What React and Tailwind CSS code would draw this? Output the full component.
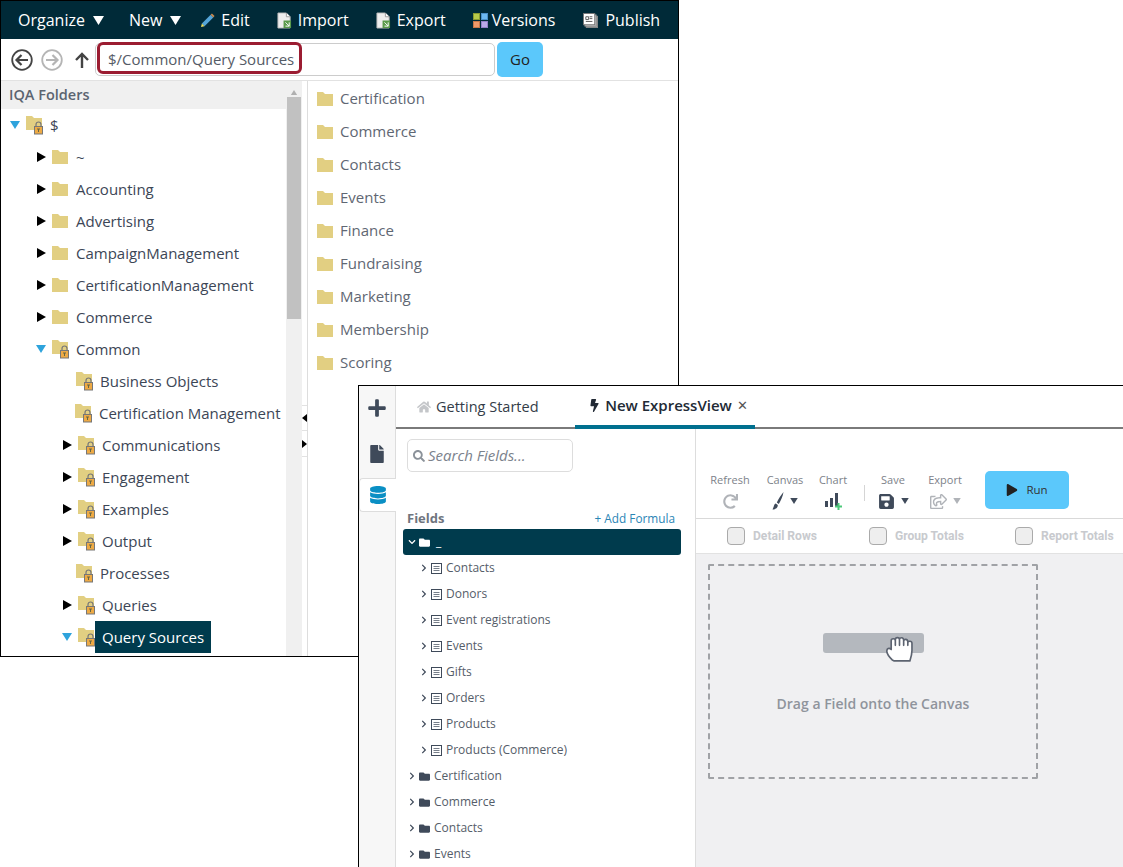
import React from 'react';
import {
  FaPlus, FaFile, FaDatabase, FaBolt, FaHome, FaSearch, FaRedo, FaSave,
  FaRegShareSquare, FaPlay, FaFolder, FaChevronRight, FaChevronDown,
} from 'react-icons/fa';

function Caret({ className }) {
  return (
    <svg viewBox="0 0 10 8" className={className}>
      <path d="M0 0h10L5 8z" fill="currentColor" />
    </svg>
  );
}

function RightTri() {
  return (
    <svg viewBox="0 0 9 10" className="w-[9px] h-[10px] text-black">
      <path d="M0 0l9 5-9 5z" fill="currentColor" />
    </svg>
  );
}

function Folder({ size = 'w-[16px] h-[14px]' }) {
  return (
    <svg viewBox="0 0 16 14" className={size}>
      <path d="M0 0h6l2 2h8v12H0z" fill="#e2cf82" />
    </svg>
  );
}

function LockFolder() {
  return (
    <svg viewBox="0 0 20 20" className="w-[20px] h-[20px] shrink-0">
      <path d="M0 1h6l2 2h8v12H0z" fill="#e2cf82" />
      <path d="M10 12V9.500a2.500 2.500 0 0 1 5 0V12" fill="none" stroke="#777" strokeWidth="1.200" />
      <rect x="8.500" y="11.500" width="8" height="7.500" fill="#eeaa44" stroke="#777" />
      <path d="M11 14h3M12.500 14v3" stroke="#664" strokeWidth="1" />
    </svg>
  );
}

function FileIcon({ color }) {
  return (
    <svg viewBox="0 0 16 18" className="w-[15px] h-[17px]">
      <path d="M1 1h9l4 4v12H1z" fill="#eee" stroke="#bbb" />
      <path d="M10 1v4h4" fill="#fff" stroke="#999" />
      <rect x="7" y="9" width="8" height="8" fill={color} />
      <path d="M9 11l4 4M13 11v4H9" stroke="#fff" fill="none" strokeWidth="1" />
    </svg>
  );
}

function Pencil() {
  return (
    <svg viewBox="0 0 16 16" className="w-[14px] h-[14px]">
      <path d="M1 12L11 2l3 3L4 15z" fill="#55a5d8" />
      <path d="M11 2l1.500-1.500 3 3L14 5z" fill="#c98a50" />
      <path d="M1 12l3 3-4 1z" fill="#f0e060" />
    </svg>
  );
}

function VersionsIcon() {
  return (
    <div className="grid grid-cols-2 gap-[1px] w-[15px] h-[15px]">
      <div className="bg-[#b6c94a] border border-[#8a9a30]" />
      <div className="bg-[#6cb8f0] border border-[#4a90c8]" />
      <div className="bg-[#f09a6a] border border-[#c87848]" />
      <div className="bg-[#b8a8e8] border border-[#9080c8]" />
    </div>
  );
}

function PublishIcon() {
  return (
    <svg viewBox="0 0 16 16" className="w-[15px] h-[15px]">
      <rect x="3.500" y="3.500" width="12" height="12" fill="#aaa" stroke="#888" />
      <rect x="2" y="2" width="12" height="12" fill="#ccc" stroke="#888" />
      <rect x="0.500" y="0.500" width="12" height="12" fill="#fff" stroke="#777" />
      <path d="M3 4h3v3H3zM7 4h3M7 6h3M3 9h7" stroke="#555" fill="none" />
    </svg>
  );
}

function CircleArrow({ dim, dir }) {
  const c = dim ? '#b5b5b5' : '#444';
  return (
    <svg viewBox="0 0 22 22" className="w-[22px] h-[22px]">
      <circle cx="11" cy="11" r="9.800" fill="none" stroke={c} strokeWidth="1.800" />
      {dir === 'left' ? (
        <path d="M17 11H6M10.500 6L5.500 11l5 5" fill="none" stroke={c} strokeWidth="2.200" />
      ) : (
        <path d="M5 11h11M11.500 6l5 5-5 5" fill="none" stroke={c} strokeWidth="2.200" />
      )}
    </svg>
  );
}

function TreeRow({ pad, arrow, label, selected }) {
  return (
    <div className={`h-8 flex items-center ${pad}`}>
      {arrow === 'open' && <Caret className="w-[10px] h-[8px] text-[#2ea3dc] mr-[6px]" />}
      {arrow === 'closed' && <div className="mr-[6px] flex"><RightTri /></div>}
      <LockFolder />
      {selected ? (
        <span className="-ml-[3px] h-8 leading-8 px-[7px] relative bg-[#003b4d] text-white text-[15px] whitespace-nowrap">{label}</span>
      ) : (
        <span className="ml-[4px] text-[15px] text-[#3c4656] whitespace-nowrap">{label}</span>
      )}
    </div>
  );
}

function PlainRow({ label }) {
  return (
    <div className="h-8 flex items-center pl-[36px]">
      <div className="mr-[6px] flex"><RightTri /></div>
      <Folder />
      <span className="ml-[8px] text-[15px] text-[#3c4656] whitespace-nowrap">{label}</span>
    </div>
  );
}

function Tool({ label, className, children }) {
  return (
    <div className={`flex flex-col items-center ${className}`}>
      <span className="text-[11px] leading-[14px] text-[#7d828a]">{label}</span>
      <div className="h-[22px] mt-[3px] flex items-center gap-[6px]">{children}</div>
    </div>
  );
}

function Check({ label, className }) {
  return (
    <div className={`flex items-center gap-2 ${className}`}>
      <div className="w-[18px] h-[18px] rounded-[4px] border border-[#aaaaaa] bg-[#eeeeee]" />
      <span className="font-['Roboto',sans-serif] font-bold text-[12.100px] text-[#c8cace] whitespace-nowrap">{label}</span>
    </div>
  );
}

const tables = ['Contacts', 'Donors', 'Event registrations', 'Events', 'Gifts', 'Orders', 'Products', 'Products (Commerce)'];
const folders = ['Certification', 'Commerce', 'Contacts', 'Events'];
const rightFolders = ['Certification', 'Commerce', 'Contacts', 'Events', 'Finance', 'Fundraising', 'Marketing', 'Membership', 'Scoring'];

export default function App() {
  return (
    <div className="relative w-[1123px] h-[867px] bg-white overflow-hidden font-['Open_Sans',sans-serif]">
      {/* back window */}
      <div className="absolute left-0 top-0 w-[679px] h-[657px] border border-black bg-white overflow-hidden flex flex-col">
        <div className="h-[38px] shrink-0 bg-[#002a38] text-white text-[16px] flex items-center pl-[17px]">
          <span>Organize</span>
          <Caret className="w-[11px] h-[9px] ml-[8px]" />
          <span className="ml-[25px]">New</span>
          <Caret className="w-[11px] h-[9px] ml-[8px]" />
          <span className="ml-[20px] mr-[6px]"><Pencil /></span>
          <span>Edit</span>
          <span className="ml-[27px] mr-[6px]"><FileIcon color="#5a9a4a" /></span>
          <span>Import</span>
          <span className="ml-[27px] mr-[6px]"><FileIcon color="#5a9a4a" /></span>
          <span>Export</span>
          <span className="ml-[27px] mr-[4px]"><VersionsIcon /></span>
          <span>Versions</span>
          <span className="ml-[28px] mr-[7px]"><PublishIcon /></span>
          <span>Publish</span>
        </div>
        <div className="h-[42px] shrink-0 border-b border-[#e2e2e2] flex items-center pl-[10px] relative">
          <CircleArrow dir="left" />
          <span className="ml-[8px]"><CircleArrow dim dir="right" /></span>
          <svg viewBox="0 0 14 16" className="w-[14px] h-[16px] ml-[12px]">
            <path d="M7 16V2M1 8l6-6 6 6" fill="none" stroke="#444" strokeWidth="2.400" />
          </svg>
          <div className="ml-[6px] w-[400px] h-[33px] border border-[#cccccc] rounded-[5px] flex items-center pl-[12px] text-[15px] text-[#555b66]">
            $/Common/Query Sources
          </div>
          <div className="ml-[2px] w-[46px] h-[35px] rounded-[5px] bg-[#5bc8fb] flex items-center justify-center text-[15px] text-[#222]">Go</div>
          <div className="absolute left-[96px] top-[3px] w-[205px] h-[32px] border-[3px] border-[#9b1c31] rounded-[6px]" />
        </div>
        <div className="flex-1 flex min-h-0">
          <div className="w-[285px] shrink-0 flex flex-col overflow-hidden">
            <div className="h-[28px] shrink-0 bg-[#f0f0f0] pl-[8px] flex items-center text-[14.500px] font-semibold text-[#5b6470]">IQA Folders</div>
            <TreeRow pad="pl-[9px]" arrow="open" label="$" />
            <PlainRow label="~" />
            {['Accounting', 'Advertising', 'CampaignManagement', 'CertificationManagement', 'Commerce'].map((n) => (
              <PlainRow key={n} label={n} />
            ))}
            <TreeRow pad="pl-[35px]" arrow="open" label="Common" />
            <TreeRow pad="pl-[75px]" label="Business Objects" />
            <TreeRow pad="pl-[74px]" label="Certification Management" />
            <TreeRow pad="pl-[62px]" arrow="closed" label="Communications" />
            <TreeRow pad="pl-[62px]" arrow="closed" label="Engagement" />
            <TreeRow pad="pl-[62px]" arrow="closed" label="Examples" />
            <TreeRow pad="pl-[62px]" arrow="closed" label="Output" />
            <TreeRow pad="pl-[75px]" label="Processes" />
            <TreeRow pad="pl-[62px]" arrow="closed" label="Queries" />
            <TreeRow pad="pl-[61px]" arrow="open" label="Query Sources" selected />
          </div>
          <div className="w-[16px] shrink-0 bg-[#f0f0f0] flex flex-col items-center pt-[9px]">
            <Caret className="w-[8px] h-[5px] text-[#b0b0b0] rotate-180" />
            <div className="mt-[2px] w-[14px] h-[222px] bg-[#c1c1c1]" />
          </div>
          <div className="w-[6px] shrink-0 border-r border-[#dddddd] bg-white flex flex-col pt-[324px]">
            <div className="h-[26px] border-y border-[#e2e2e2] flex items-center">
              <svg viewBox="0 0 5 8" className="w-[5px] h-[8px]"><path d="M5 0v8L0 4z" fill="#000" /></svg>
            </div>
            <div className="h-[26px] border-b border-[#e2e2e2] flex items-center">
              <svg viewBox="0 0 5 8" className="w-[5px] h-[8px]"><path d="M0 0v8l5-4z" fill="#000" /></svg>
            </div>
          </div>
          <div className="flex-1 pl-[9px] pt-[1px]">
            {rightFolders.map((n) => (
              <div key={n} className="h-[33px] flex items-center">
                <Folder />
                <span className="ml-[7px] text-[15px] text-[#5f6773]">{n}</span>
              </div>
            ))}
          </div>
        </div>
      </div>

      {/* front window */}
      <div className="absolute left-[358px] top-[385px] w-[765px] h-[482px] border-l border-t border-black bg-white overflow-hidden flex">
        <div className="w-[37px] shrink-0 bg-[#f7f7f7] border-r border-[#dddddd] flex flex-col relative">
          <div className="h-[44px] flex items-center justify-center"><FaPlus className="text-[#3f4a5a] text-[20px]" /></div>
          <div className="h-[48px] flex items-center justify-center"><FaFile className="text-[#3f4a5a] text-[18px]" /></div>
          <div className="w-[37px] h-[34px] bg-white border-y border-l border-[#dddddd] rounded-l-[4px] flex items-center justify-center">
            <FaDatabase className="text-[#0a8fc4] text-[18px]" />
          </div>
        </div>
        <div className="flex-1 flex flex-col min-w-0">
          <div className="h-[43px] shrink-0 border-b-2 border-[#7a7a7a] flex items-end pl-[21px] text-[14.500px] text-[#333c48]">
            <div className="flex items-center gap-[5px] h-[41px]">
              <FaHome className="text-[#c4c6c9] text-[14px]" />
              <span>Getting Started</span>
            </div>
            <div className="ml-[36px] w-[180px] h-[43px] -mb-[2px] pl-[7px] border-b-[4px] border-[#00708f] flex items-center gap-[4px] justify-center font-semibold text-[15px] text-[#222a35]">
              <FaBolt className="text-[#222a35] text-[13px]" />
              <span>New ExpressView</span>
              <span className="ml-[1px] font-normal text-[13px] text-[#555]">✕</span>
            </div>
          </div>
          <div className="flex-1 flex min-h-0">
            <div className="w-[300px] shrink-0 border-r border-[#dddddd] flex flex-col overflow-hidden">
              <div className="ml-[11px] mt-[10px] w-[166px] h-[34px] rounded-[5px] border border-[#dddddd] flex items-center pl-[5px] gap-[3px]">
                <FaSearch className="text-[#8b929a] text-[12px]" />
                <span className="italic text-[15px] text-[#7b828c]">Search Fields...</span>
              </div>
              <div className="mt-[37px] h-[20px] ml-[11px] mr-[20px] flex items-center justify-between">
                <span className="text-[13px] font-bold text-[#6f757e]">Fields</span>
                <span className="text-[11.800px] text-[#2a85b5]">+ Add Formula</span>
              </div>
              <div className="mx-[7px] w-[278px] h-[26px] shrink-0 rounded-[3px] bg-[#003b4d] text-white flex items-center pl-[5px]">
                <FaChevronDown className="text-[8px]" />
                <FaFolder className="text-[11px] ml-[3px]" />
                <span className="ml-[6px] text-[12px]">_</span>
              </div>
              {tables.map((n) => (
                <div key={n} className="h-[26px] shrink-0 flex items-center pl-[24px] text-[12px] text-[#555d69]">
                  <FaChevronRight className="text-[8px] text-[#3f4a5a]" />
                  <svg viewBox="0 0 11 11" className="w-[11px] h-[11px] ml-[3px]">
                    <rect x="0.500" y="0.500" width="10" height="10" fill="none" stroke="#3f4a5a" />
                    <path d="M2.500 3.500h6M2.500 5.500h6M2.500 7.500h6" stroke="#777f8a" />
                  </svg>
                  <span className="ml-[4px] whitespace-nowrap">{n}</span>
                </div>
              ))}
              {folders.map((n) => (
                <div key={n} className="h-[26px] shrink-0 flex items-center pl-[12px] text-[12px] text-[#555d69]">
                  <FaChevronRight className="text-[8px] text-[#3f4a5a]" />
                  <FaFolder className="text-[11px] text-[#3f4a5a] ml-[3px]" />
                  <span className="ml-[4px]">{n}</span>
                </div>
              ))}
            </div>
            <div className="flex-1 flex flex-col min-w-0">
              <div className="h-[90px] shrink-0 border-b border-[#d9d9d9] flex items-start pt-[44px] pl-[14px]">
                <Tool label="Refresh" className="w-[40px]"><FaRedo className="text-[#b0b3b8] text-[15px]" /></Tool>
                <Tool label="Canvas" className="w-[40px] ml-[15px]">
                  <svg viewBox="0 0 12 18" className="w-[12px] h-[18px]">
                    <path d="M11.500 0C9 3 6.500 7 4.800 10.500L6.800 12C8.500 9 11 4 11.500 0zM3.800 11.500C1.800 12 2 15 .5 17.500 3 17.500 6 16 5.800 13z" fill="#3f4a5a" />
                  </svg>
                  <Caret className="w-[8px] h-[6px] text-[#3f4a5a]" />
                </Tool>
                <Tool label="Chart" className="w-[34px] ml-[11px]">
                  <svg viewBox="0 0 18 18" className="w-[18px] h-[18px]">
                    <path d="M1 9h3v6H1zM6 6h3v9H6zM11 1h3v14h-3z" fill="#3f4a5a" />
                    <path d="M14.500 11v7M11 14.500h7" stroke="#4cc97a" strokeWidth="2" />
                  </svg>
                </Tool>
                <div className="w-px h-[16px] bg-[#d5d5d5] ml-[14px] mt-[12px]" />
                <Tool label="Save" className="w-[32px] ml-[12px]">
                  <FaSave className="text-[#3f4a5a] text-[17px]" />
                  <Caret className="w-[8px] h-[6px] text-[#3f4a5a]" />
                </Tool>
                <Tool label="Export" className="w-[36px] ml-[18px]">
                  <FaRegShareSquare className="text-[#b0b3b8] text-[17px]" />
                  <Caret className="w-[8px] h-[6px] text-[#b0b3b8]" />
                </Tool>
                <div className="ml-[22px] -mt-[2px] w-[84px] h-[38px] rounded-[5px] bg-[#5bc8fb] flex items-center justify-center gap-[8px]">
                  <FaPlay className="text-[#222] text-[12px]" />
                  <span className="text-[11.500px] text-[#333]">Run</span>
                </div>
              </div>
              <div className="h-[35px] shrink-0 border-b border-[#e2e2e2] flex items-center pl-[31px] whitespace-nowrap overflow-hidden">
                <Check label="Detail Rows" className="w-[142px] shrink-0" />
                <Check label="Group Totals" className="w-[146px] shrink-0" />
                <Check label="Report Totals" className="shrink-0" />
              </div>
              <div className="flex-1 bg-[#f0f0f2] pl-[12px] pt-[10px]">
                <div className="w-[330px] h-[215px] border-2 border-dashed border-[#a0a2a6] rounded-[2px] flex flex-col items-center relative">
                  <div className="mt-[67px] w-[101px] h-[20px] rounded-[3px] bg-[#b4b8be]" />
                  <svg viewBox="0 0 26 26" className="absolute left-[176px] top-[70px] w-[27px] h-[27px]">
                    <path d="M6 23C4 21 1 17 .8 15C.6 12 3 11 5 13V4.500C5 2 9 2 9 4.500V9V3.500C9 1 13 1 13 3.500V9V3.500C13 1 17 1 17 4V9V5C17 2.500 21 2.500 21 5.500V9V6.500C21 4.500 25 4.500 25 7V14C25 18 24 21 23 24H8Z" fill="#fff" stroke="#5c6370" strokeWidth="1.600" strokeLinejoin="round" />
                  </svg>
                  <span className="mt-[40px] text-[14px] font-semibold text-[#8f949c]">Drag a Field onto the Canvas</span>
                </div>
              </div>
            </div>
          </div>
        </div>
      </div>
    </div>
  );
}
